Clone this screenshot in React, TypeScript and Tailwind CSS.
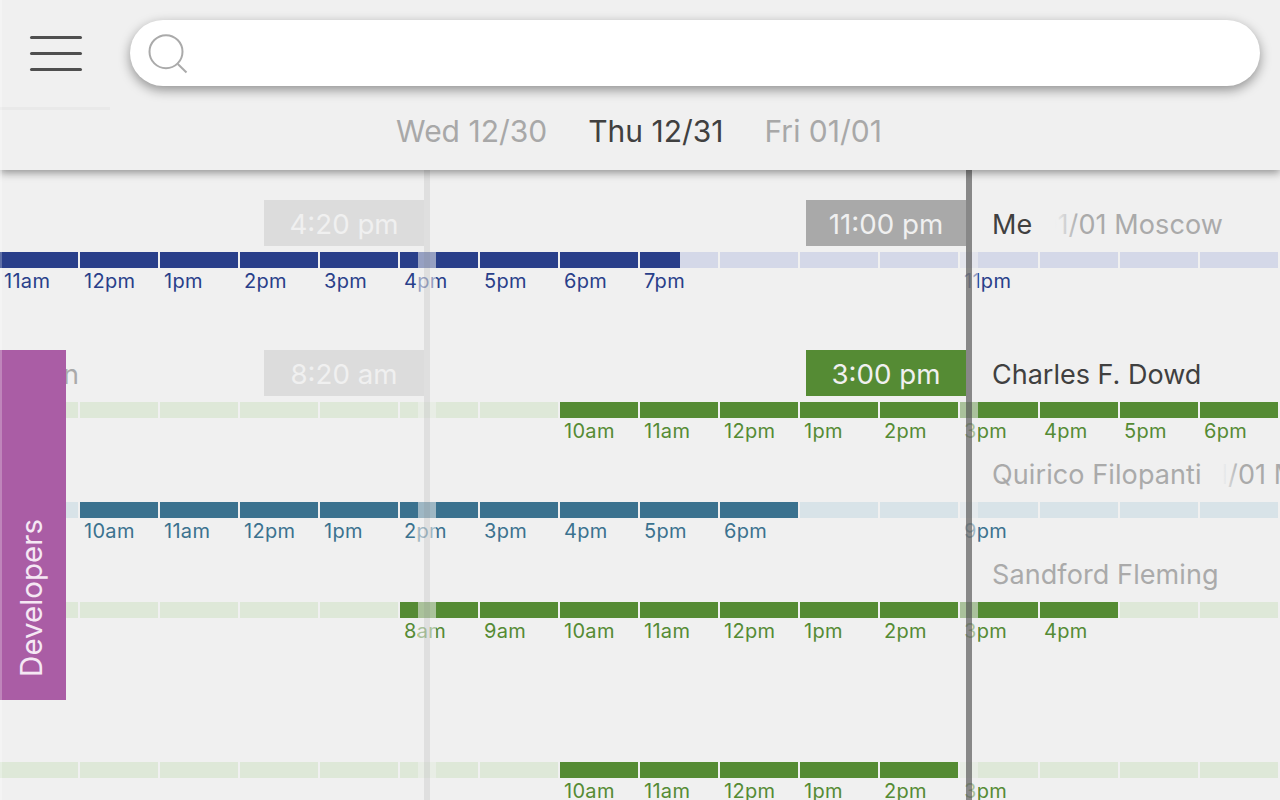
const NAVY = { dark: "bg-[#293f8a]", light: "bg-[#d4d8e8]", text: "text-[#293f8a]" };
const GREEN = { dark: "bg-[#558b34]", light: "bg-[#dee8d8]", text: "text-[#558b34]" };
const TEAL = { dark: "bg-[#3b728f]", light: "bg-[#d8e3e8]", text: "text-[#3b728f]" };

type Palette = typeof NAVY;

function Bar({ palette, start, end }: { palette: Palette; start: number; end: number }) {
  const cells = Array.from({ length: 16 }, (_, i) => i * 80);
  return (
    <div className="flex gap-[2px] h-4 w-[1280px]">
      {cells.map((x) => {
        const from = Math.max(x, start);
        const to = Math.min(x + 78, end);
        const width = Math.max(0, to - from);
        return (
          <div key={x} className={`relative w-[78px] h-4 shrink-0 overflow-hidden ${palette.light}`}>
            {width > 0 && (
              <div className={`absolute top-0 bottom-0 ${palette.dark}`} style={{ left: from - x, width }} />
            )}
          </div>
        );
      })}
    </div>
  );
}

function Ticks({ palette, labels }: { palette: Palette; labels: (string | null)[] }) {
  return (
    <div className={`flex w-[1280px] mt-[3px] h-5 text-[20px] tracking-[0.3px] leading-5 ${palette.text}`}>
      {labels.map((l, i) => (
        <span key={i} className="w-20 shrink-0 pl-1 whitespace-nowrap">
          {l}
        </span>
      ))}
    </div>
  );
}

function TimeBox({ bg, text }: { bg: string; text: string }) {
  return <div className={`w-40 h-[46px] shrink-0 pt-[3px] flex items-center justify-center text-[27.7px] text-[#f0f0f0] ${bg}`}>{text}</div>;
}

const row1 = ["11am", "12pm", "1pm", "2pm", "3pm", "4pm", "5pm", "6pm", "7pm", null, null, null, "11pm", null, null, null];
const row2 = [null, null, null, null, null, null, null, "10am", "11am", "12pm", "1pm", "2pm", "3pm", "4pm", "5pm", "6pm"];
const row3 = [null, "10am", "11am", "12pm", "1pm", "2pm", "3pm", "4pm", "5pm", "6pm", null, null, "9pm", null, null, null];
const row4 = [null, null, null, null, null, "8am", "9am", "10am", "11am", "12pm", "1pm", "2pm", "3pm", "4pm", null, null];
const row5 = [null, null, null, null, null, null, null, "10am", "11am", "12pm", "1pm", "2pm", "3pm", null, null, null];

export default function App() {
  return (
    <div className="relative w-[1280px] h-[800px] overflow-hidden bg-[#f0f0f0] font-['Inter',sans-serif]">
      <header className="relative z-30 h-[170px] bg-[#f0f0f0] shadow-[0_3px_8px_rgba(0,0,0,0.38)]">
        <div className="flex">
          <div className="w-[110px] h-[110px] shrink-0 border-b-[3px] border-[#e9e9e9] flex flex-col gap-[13px] pt-9 pl-[30px]">
            <div className="w-[52px] h-[3px] rounded-sm bg-[#4f4f4f]" />
            <div className="w-[52px] h-[3px] rounded-sm bg-[#4f4f4f]" />
            <div className="w-[52px] h-[3px] rounded-sm bg-[#4f4f4f]" />
          </div>
          <div className="ml-5 mt-5 w-[1130px] h-[66px] rounded-[33px] bg-white shadow-[0_4px_12px_rgba(0,0,0,0.4)] flex items-center pl-[18px]">
            <svg width="42" height="42" viewBox="0 0 42 42" fill="none" stroke="#aaaaaa" strokeWidth="2">
              <circle cx="18" cy="19.7" r="16.5" />
              <path d="M29.8 32 L38.5 40.5" />
            </svg>
          </div>
        </div>
        <div className="flex justify-center gap-[41px] text-[30px] leading-10 mt-[1px] pr-[2px]">
          <span className="text-[#a8a8a8]">Wed 12/30</span>
          <span className="text-[#404040]">Thu 12/31</span>
          <span className="text-[#a8a8a8]">Fri 01/01</span>
        </div>
      </header>

      <main className="relative">
        <section className="pt-[30px] h-[180px]">
          <div className="relative z-10 flex h-[46px] items-center text-[27px] mb-[6px] whitespace-nowrap">
            <div className="ml-[264px]"><TimeBox bg="bg-[#dcdcdc]" text="4:20 pm" /></div>
            <div className="ml-[382px]"><TimeBox bg="bg-[#a9a9a9]" text="11:00 pm" /></div>
            <span className="ml-[26px] w-[63px] shrink-0 pt-[4px] text-[#404040]">Me</span>
            <span className="relative flex justify-end w-[168px] pt-[4px] overflow-hidden tracking-[0.1px] text-[#aaaaaa]">
              <span>01/01 Moscow</span>
              <span className="absolute inset-y-0 left-0 w-6 bg-gradient-to-r from-[#f0f0f0] to-transparent" />
            </span>
          </div>
          <Bar palette={NAVY} start={0} end={680} />
          <Ticks palette={NAVY} labels={row1} />
        </section>

        <section className="h-[100px]">
          <div className="relative z-10 flex h-[46px] items-center text-[27px] mb-[6px] whitespace-nowrap">
            <span className="ml-[63px] w-[201px] shrink-0 pt-[4px] text-[#aaaaaa]">n</span>
            <TimeBox bg="bg-[#dcdcdc]" text="8:20 am" />
            <div className="ml-[382px]"><TimeBox bg="bg-[#558b34]" text="3:00 pm" /></div>
            <span className="ml-[26px] pt-[4px] text-[#404040]">Charles F. Dowd</span>
          </div>
          <Bar palette={GREEN} start={560} end={1280} />
          <Ticks palette={GREEN} labels={row2} />
        </section>

        <section className="h-[100px]">
          <div className="relative z-10 flex h-[46px] items-center text-[27px] tracking-[0.1px] mb-[6px] pl-[992px] pt-[4px] whitespace-nowrap text-[#aaaaaa]">
            <span className="w-[231px] shrink-0">Quirico Filopanti</span>
            <span className="relative flex w-[57px] shrink-0 overflow-hidden">
              <span className="-ml-[6px]">1/01 Moscow</span>
              <span className="absolute inset-y-0 left-0 w-4 bg-gradient-to-r from-[#f0f0f0] to-transparent" />
            </span>
          </div>
          <Bar palette={TEAL} start={80} end={800} />
          <Ticks palette={TEAL} labels={row3} />
        </section>

        <section className="h-[160px]">
          <div className="relative z-10 flex h-[46px] items-center text-[27px] tracking-[0.1px] mb-[6px] pl-[992px] pt-[4px] whitespace-nowrap text-[#aaaaaa]">
            Sandford Fleming
          </div>
          <Bar palette={GREEN} start={400} end={1120} />
          <Ticks palette={GREEN} labels={row4} />
        </section>

        <section>
          <div className="h-[46px] mb-[6px]" />
          <Bar palette={GREEN} start={560} end={960} />
          <Ticks palette={GREEN} labels={row5} />
        </section>

        <div className="absolute left-[418px] top-0 h-[630px] w-[18px] bg-[#f0f0f0]/55" />
        <div className="absolute left-[424px] top-0 h-[630px] w-[6px] bg-[#808080]/15" />
        <div className="absolute left-[960px] top-0 h-[630px] w-[18px] bg-[#f0f0f0]/55" />
        <div className="absolute left-[966px] top-0 h-[630px] w-[6px] bg-[#505050]/65" />

        <div className="absolute left-0 top-[180px] w-[66px] h-[350px] z-20 bg-[#aa5da5] flex items-end justify-center pb-[23px] pr-[3px]">
          <span className="[writing-mode:vertical-rl] rotate-180 text-[29.5px] leading-none text-[#f5e8f4] whitespace-nowrap">Developers</span>
        </div>
      </main>

      <div className="absolute left-0 top-0 z-40 h-full w-[2px] bg-white/25" />
    </div>
  );
}
